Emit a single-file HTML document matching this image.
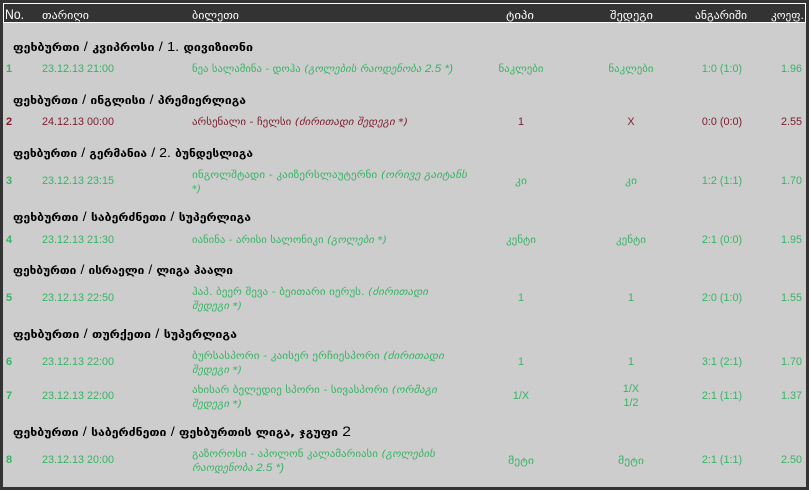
<!DOCTYPE html>
<html><head><meta charset="utf-8"><style>
html,body{margin:0;padding:0;width:809px;height:490px;overflow:hidden;background:#333}
svg{display:block}
text{font-family:"DejaVu Sans",sans-serif;font-size:10px}
.l{font-family:"Liberation Sans",sans-serif;font-size:10.8px}
.h{fill:#fff;font-size:10.5px}
.g{fill:#000;font-weight:bold;font-size:11px}
.a{font-family:"Liberation Sans",sans-serif;font-weight:normal;font-size:13px}
.p{font-family:"Liberation Sans",sans-serif;font-size:11px}
.t{fill:#37b465}
.r{fill:#7c1c2c}
.n{font-family:"Liberation Sans",sans-serif;font-size:11px;font-weight:bold}
.i{font-style:italic}
.m{text-anchor:middle}
</style></head><body>
<svg width="809" height="490" viewBox="0 0 809 490" xmlns="http://www.w3.org/2000/svg">
<rect width="809" height="490" fill="#333"/>
<rect x="3" y="23" width="803" height="464" fill="#cdcdcd"/>
<rect x="3.5" y="3.5" width="802" height="19" fill="#333" stroke="#fff" stroke-width="1"/>
<text x="5" y="19" class="l" style="fill:#fff;font-size:14px" textLength="19" lengthAdjust="spacingAndGlyphs">No.</text>
<text x="42" y="19" class="h" textLength="47" lengthAdjust="spacingAndGlyphs">თარიღი</text>
<text x="192" y="19" class="h" textLength="47" lengthAdjust="spacingAndGlyphs">ბილეთი</text>
<text x="506" y="19" class="h" textLength="28" lengthAdjust="spacingAndGlyphs">ტიპი</text>
<text x="610" y="19" class="h" textLength="43" lengthAdjust="spacingAndGlyphs">შედეგი</text>
<text x="695" y="19" class="h" textLength="52" lengthAdjust="spacingAndGlyphs">ანგარიში</text>
<text x="771" y="19" class="h" textLength="33" lengthAdjust="spacingAndGlyphs">კოეფ.</text>

<text x="13" y="51" class="g" textLength="240" lengthAdjust="spacingAndGlyphs">ფეხბურთი <tspan class="a">/</tspan> კვიპროსი <tspan class="a">/ 1.</tspan> დივიზიონი</text>
<text x="6" y="72" class="n t">1</text>
<text x="42" y="72" class="l t">23.12.13 21:00</text>
<text x="192" y="72" class="t" textLength="261" lengthAdjust="spacingAndGlyphs">ნეა სალამინა - დოჰა <tspan class="i">(გოლების რაოდენობა <tspan class="p">2.5 *)</tspan></tspan></text>
<text x="521" y="72" class="t m" textLength="45" lengthAdjust="spacingAndGlyphs">ნაკლები</text>
<text x="631" y="72" class="t m" textLength="45" lengthAdjust="spacingAndGlyphs">ნაკლები</text>
<text x="722" y="72" class="l t m">1:0 (1:0)</text>
<text x="802" y="72" class="l t" text-anchor="end">1.96</text>

<text x="13" y="104" class="g" textLength="233" lengthAdjust="spacingAndGlyphs">ფეხბურთი <tspan class="a">/</tspan> ინგლისი <tspan class="a">/</tspan> პრემიერლიგა</text>
<text x="6" y="125" class="n r">2</text>
<text x="42" y="125" class="l r">24.12.13 00:00</text>
<text x="192" y="125" class="r" textLength="216" lengthAdjust="spacingAndGlyphs">არსენალი - ჩელსი <tspan class="i">(ძირითადი შედეგი *)</tspan></text>
<text x="521" y="125" class="l r m">1</text>
<text x="631" y="125" class="l r m">X</text>
<text x="722" y="125" class="l r m">0:0 (0:0)</text>
<text x="802" y="125" class="l r" text-anchor="end">2.55</text>

<text x="13" y="157" class="g" textLength="240" lengthAdjust="spacingAndGlyphs">ფეხბურთი <tspan class="a">/</tspan> გერმანია <tspan class="a">/ 2.</tspan> ბუნდესლიგა</text>
<text x="6" y="184" class="n t">3</text>
<text x="42" y="184" class="l t">23.12.13 23:15</text>
<text x="192" y="178" class="t" textLength="275" lengthAdjust="spacingAndGlyphs">ინგოლშტადი - კაიზერსლაუტერნი <tspan class="i">(ორივე გაიტანს</tspan></text>
<text x="192" y="192" class="t i">*)</text>
<text x="521" y="184" class="t m" textLength="12" lengthAdjust="spacingAndGlyphs">კი</text>
<text x="631" y="184" class="t m" textLength="12" lengthAdjust="spacingAndGlyphs">კი</text>
<text x="722" y="184" class="l t m">1:2 (1:1)</text>
<text x="802" y="184" class="l t" text-anchor="end">1.70</text>

<text x="13" y="221" class="g" textLength="238" lengthAdjust="spacingAndGlyphs">ფეხბურთი <tspan class="a">/</tspan> საბერძნეთი <tspan class="a">/</tspan> სუპერლიგა</text>
<text x="6" y="243" class="n t">4</text>
<text x="42" y="243" class="l t">23.12.13 21:30</text>
<text x="192" y="243" class="t" textLength="195" lengthAdjust="spacingAndGlyphs">იანინა - არისი სალონიკი <tspan class="i">(გოლები *)</tspan></text>
<text x="521" y="243" class="t m" textLength="30" lengthAdjust="spacingAndGlyphs">კენტი</text>
<text x="631" y="243" class="t m" textLength="30" lengthAdjust="spacingAndGlyphs">კენტი</text>
<text x="722" y="243" class="l t m">2:1 (0:0)</text>
<text x="802" y="243" class="l t" text-anchor="end">1.95</text>

<text x="13" y="274" class="g" textLength="220" lengthAdjust="spacingAndGlyphs">ფეხბურთი <tspan class="a">/</tspan> ისრაელი <tspan class="a">/</tspan> ლიგა ჰაალი</text>
<text x="6" y="301" class="n t">5</text>
<text x="42" y="301" class="l t">23.12.13 22:50</text>
<text x="192" y="295" class="t" textLength="236" lengthAdjust="spacingAndGlyphs">ჰაპ. ბეერ შევა - ბეითარი იერუს. <tspan class="i">(ძირითადი</tspan></text>
<text x="192" y="309" class="t i" textLength="50" lengthAdjust="spacingAndGlyphs">შედეგი *)</text>
<text x="521" y="301" class="l t m">1</text>
<text x="631" y="301" class="l t m">1</text>
<text x="722" y="301" class="l t m">2:0 (1:0)</text>
<text x="802" y="301" class="l t" text-anchor="end">1.55</text>

<text x="13" y="338" class="g" textLength="224" lengthAdjust="spacingAndGlyphs">ფეხბურთი <tspan class="a">/</tspan> თურქეთი <tspan class="a">/</tspan> სუპერლიგა</text>
<text x="6" y="365" class="n t">6</text>
<text x="42" y="365" class="l t">23.12.13 22:00</text>
<text x="192" y="359" class="t" textLength="252" lengthAdjust="spacingAndGlyphs">ბურსასპორი - კაისერ ერჩიესპორი <tspan class="i">(ძირითადი</tspan></text>
<text x="192" y="373" class="t i" textLength="50" lengthAdjust="spacingAndGlyphs">შედეგი *)</text>
<text x="521" y="365" class="l t m">1</text>
<text x="631" y="365" class="l t m">1</text>
<text x="722" y="365" class="l t m">3:1 (2:1)</text>
<text x="802" y="365" class="l t" text-anchor="end">1.70</text>

<text x="6" y="399" class="n t">7</text>
<text x="42" y="399" class="l t">23.12.13 22:00</text>
<text x="192" y="393" class="t" textLength="245" lengthAdjust="spacingAndGlyphs">ახისარ ბელედიე სპორი - სივასპორი <tspan class="i">(ორმაგი</tspan></text>
<text x="192" y="407" class="t i" textLength="50" lengthAdjust="spacingAndGlyphs">შედეგი *)</text>
<text x="521" y="399" class="l t m">1/X</text>
<text x="631" y="392" class="l t m">1/X</text>
<text x="631" y="406" class="l t m">1/2</text>
<text x="722" y="399" class="l t m">2:1 (1:1)</text>
<text x="802" y="399" class="l t" text-anchor="end">1.37</text>

<text x="13" y="436" class="g" textLength="338" lengthAdjust="spacingAndGlyphs">ფეხბურთი <tspan class="a">/</tspan> საბერძნეთი <tspan class="a">/</tspan> ფეხბურთის ლიგა, ჯგუფი <tspan class="a" style="font-size:14px">2</tspan></text>
<text x="6" y="463" class="n t">8</text>
<text x="42" y="463" class="l t">23.12.13 20:00</text>
<text x="192" y="457" class="t" textLength="243" lengthAdjust="spacingAndGlyphs">გაზოროსი - აპოლონ კალამარიასი <tspan class="i">(გოლების</tspan></text>
<text x="192" y="471" class="t i" textLength="92" lengthAdjust="spacingAndGlyphs">რაოდენობა <tspan class="p">2.5 *)</tspan></text>
<text x="521" y="464" class="t m" textLength="26" lengthAdjust="spacingAndGlyphs">მეტი</text>
<text x="631" y="464" class="t m" textLength="26" lengthAdjust="spacingAndGlyphs">მეტი</text>
<text x="722" y="463" class="l t m">2:1 (1:1)</text>
<text x="802" y="463" class="l t" text-anchor="end">2.50</text>
</svg>
</body></html>
